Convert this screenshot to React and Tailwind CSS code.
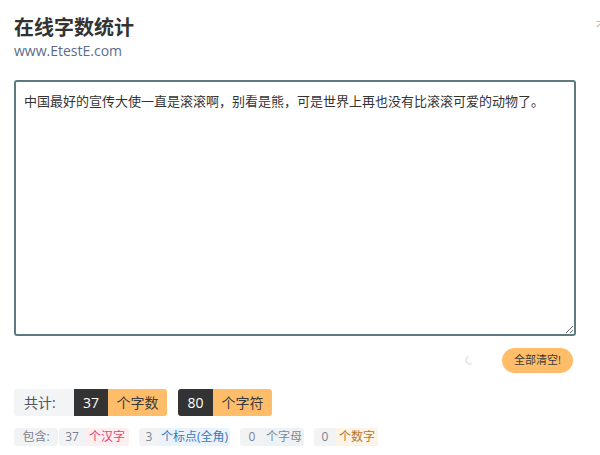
import React from "react";

const font = { fontFamily: '"Open Sans", "Noto Sans CJK SC", sans-serif' };

function Pair({ num, label, labelCls, numW, labelW }) {
  return (
    <div className="flex h-[18px] items-stretch text-[12px] leading-[18px] rounded-[3px] overflow-hidden">
      <span className={`bg-[#f2f3f5] text-[#7b8290] text-center ${numW}`}>{num}</span>
      <span className={`text-center ${labelW} ${labelCls}`}>{label}</span>
    </div>
  );
}

export default function App() {
  const text = "中国最好的宣传大使一直是滚滚啊，别看是熊，可是世界上再也没有比滚滚可爱的动物了。";
  return (
    <div className="relative w-[600px] h-[455px] bg-white overflow-hidden" style={font}>
      <div className="absolute right-[-6px] top-[18px] text-[10px] text-[#aaa]">不</div>
      <div className="px-[14px] pt-[15px]">
        <h1 className="text-[20px] font-bold leading-[26px] text-[#333]">在线字数统计</h1>
        <div className="text-[14px] leading-[18px] text-[#5b6b8c] mt-[1px]">www.EtestE.com</div>
        <textarea
          className="block mt-[20px] w-[562px] h-[256px] border-2 border-[#5f7b82] rounded-[3px] px-[8px] py-[9px] text-[13px] leading-[20px] text-[#333] resize-y outline-none"
          style={font}
          defaultValue={text}
        />
        <div className="flex items-center justify-end h-[34px] mt-[7px] pr-[13px]">
          <div className="w-[10px] h-[10px] rounded-full border-2 border-[#e5e7eb] border-r-transparent border-t-transparent mr-[27px] rotate-[20deg]" />
          <button className="h-[25px] w-[71px] rounded-full bg-[#ffbd69] text-[11px] text-[#3a3a3a]">全部清空!</button>
        </div>
        <div className="flex items-center mt-[12px] gap-[11px]">
          <div className="flex h-[27px] rounded-[3px] overflow-hidden text-[14px] leading-[27px]">
            <span className="bg-[#f3f4f6] text-[#4b5563] w-[60px] pl-[10px]">共计:</span>
            <span className="bg-[#333] text-white w-[34px] text-center">37</span>
            <span className="bg-[#ffbd69] text-[#3a3a3a] w-[59px] text-center">个字数</span>
          </div>
          <div className="flex h-[27px] rounded-[3px] overflow-hidden text-[14px] leading-[27px]">
            <span className="bg-[#333] text-white w-[35px] text-center">80</span>
            <span className="bg-[#ffbd69] text-[#3a3a3a] w-[59px] text-center">个字符</span>
          </div>
        </div>
        <div className="flex items-center mt-[12px] gap-[10px]">
          <div className="flex">
            <span className="h-[18px] w-[44px] text-center text-[12px] leading-[18px] bg-[#f2f3f5] text-[#7b8290] rounded-[3px] mr-[1px]">包含:</span>
            <Pair num="37" label="个汉字" numW="w-[26px]" labelW="w-[44px]" labelCls="bg-[#fdeef2] text-[#e0476b]" />
          </div>
          <Pair num="3" label="个标点(全角)" numW="w-[20px]" labelW="w-[71px]" labelCls="bg-[#eaf3fb] text-[#3a7ab8]" />
          <Pair num="0" label="个字母" numW="w-[24px]" labelW="w-[40px]" labelCls="bg-[#eef2f5] text-[#7a8a99]" />
          <Pair num="0" label="个数字" numW="w-[22px]" labelW="w-[42px]" labelCls="bg-[#fdf3e6] text-[#b7752a]" />
        </div>
      </div>
    </div>
  );
}
